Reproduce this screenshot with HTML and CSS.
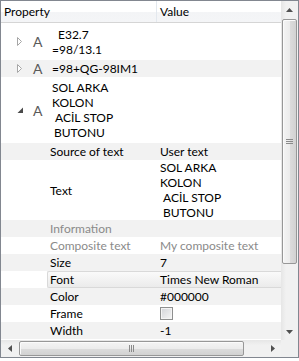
FILE: index.html
```html
<!DOCTYPE html>
<html lang="tr">
<head>
  <meta charset="UTF-8">
  <meta name="viewport" content="width=device-width, initial-scale=1.0">
  <title>Property Browser</title>
  <link rel="stylesheet" href="styles.css">
</head>
<body>

  <div class="tree">
    <div class="viewport">

      <div class="header">
        <div class="hcell">Property</div>
        <div class="hcell">Value</div>
      </div>

      <div class="row r1">
        <div class="name">
          <span class="branch"><svg width="6" height="9" viewBox="0 0 6 9"><path d="M0.5 0.5 L4.5 4.5 L0.5 8.5 Z" fill="#fff" stroke="#a6a6a6"/></svg></span>
          <span class="icon">A</span>
          <div class="lines">
            <div class="in6">E32.7</div>
            <div>=98/13.1</div>
          </div>
        </div>
        <div class="value"></div>
      </div>

      <div class="row alt">
        <div class="name">
          <span class="branch"><svg width="6" height="9" viewBox="0 0 6 9"><path d="M0.5 0.5 L4.5 4.5 L0.5 8.5 Z" fill="#fff" stroke="#a6a6a6"/></svg></span>
          <span class="icon">A</span>
          <div>=98+QG-98IM1</div>
        </div>
        <div class="value"></div>
      </div>

      <div class="row r3">
        <div class="name">
          <span class="branch"><svg width="7" height="7" viewBox="0 0 7 7"><path d="M6 0.5 L6 6 L0.5 6 Z" fill="#4a4a4a"/></svg></span>
          <span class="icon">A</span>
          <div class="lines">
            <div>SOL ARKA</div>
            <div>KOLON</div>
            <div class="in3">ACİL STOP</div>
            <div class="in2">BUTONU</div>
          </div>
        </div>
        <div class="value"></div>
      </div>

      <div class="row alt">
        <div class="name child"><div class="label">Source of text</div></div>
        <div class="value">User text</div>
      </div>

      <div class="row">
        <div class="name child"><div class="label">Text</div></div>
        <div class="value">
          <div class="lines">
            <div>SOL ARKA</div>
            <div>KOLON</div>
            <div class="in3">ACİL STOP</div>
            <div class="in3">BUTONU</div>
          </div>
        </div>
      </div>

      <div class="row alt dim">
        <div class="name child"><div class="label">Information</div></div>
        <div class="value"></div>
      </div>

      <div class="row dim">
        <div class="name child"><div class="label">Composite text</div></div>
        <div class="value">My composite text</div>
      </div>

      <div class="row alt">
        <div class="name child"><div class="label">Size</div></div>
        <div class="value">7</div>
      </div>

      <div class="row sel">
        <div class="name child"><div class="label">Font</div></div>
        <div class="value">Times New Roman</div>
      </div>

      <div class="row alt">
        <div class="name child"><div class="label">Color</div></div>
        <div class="value">#000000</div>
      </div>

      <div class="row">
        <div class="name child"><div class="label">Frame</div></div>
        <div class="value"><span class="check"></span></div>
      </div>

      <div class="row alt">
        <div class="name child"><div class="label">Width</div></div>
        <div class="value">-1</div>
      </div>

    </div>

    <!-- vertical scrollbar -->
    <div class="vscroll">
      <div class="sbtn"><svg width="7" height="4" viewBox="0 0 7 4"><path d="M3.5 0 L7 4 L0 4 Z" fill="#505050"/></svg></div>
      <div class="vthumb">
        <svg width="7" height="5" viewBox="0 0 7 5"><path d="M0 0.5 H7 M0 2.5 H7 M0 4.5 H7" stroke="#8a8a8a"/></svg>
      </div>
      <div class="track"></div>
      <div class="sbtn"><svg width="7" height="4" viewBox="0 0 7 4"><path d="M0 0 L7 0 L3.5 4 Z" fill="#505050"/></svg></div>
    </div>

    <!-- horizontal scrollbar -->
    <div class="hscroll">
      <div class="sbtn"><svg width="4" height="7" viewBox="0 0 4 7"><path d="M0 3.5 L4 0 L4 7 Z" fill="#505050"/></svg></div>
      <div class="hthumb">
        <svg width="5" height="7" viewBox="0 0 5 7"><path d="M0.5 0 V7 M2.5 0 V7 M4.5 0 V7" stroke="#8a8a8a"/></svg>
      </div>
      <div class="track"></div>
      <div class="sbtn"><svg width="4" height="7" viewBox="0 0 4 7"><path d="M0 0 L4 3.5 L0 7 Z" fill="#505050"/></svg></div>
    </div>

    <div class="corner"></div>
  </div>

</body>
</html>
```

FILE: styles.css
```css
* {
  box-sizing: border-box;
}

body {
  margin: 0;
  background: #fff;
  font-family: Lato, "Liberation Sans", sans-serif;
  font-size: 12px;
  color: #000;
}

/* widget frame */
.tree {
  width: 299px;
  height: 358px;
  border: 1px solid #828790;
  display: grid;
  grid-template-columns: 280px 17px;
  grid-template-rows: 339px 17px;
}

.viewport {
  overflow: hidden;
  background: #fff;
}

/* header */
.header {
  display: grid;
  grid-template-columns: 156px 1fr;
  height: 22px;
  border-bottom: 1px solid #d5d5d5;
  background: linear-gradient(#ffffff, #ffffff 50%, #f3f4f6 51%, #f4f5f7);
}

.hcell {
  line-height: 21px;
  padding-left: 3px;
}

.hcell:first-child {
  border-right: 1px solid #e3e8ee;
}

/* rows */
.row {
  display: grid;
  grid-template-columns: 156px 1fr;
  height: 17px;
  line-height: 17px;
}

.alt {
  background: #f2f2f2;
}

.dim {
  color: #8a8a8a;
}

.row.r1 {
  height: 37px;
}

.row.r3 {
  height: 66px;
}

.row:has(.value .lines) {
  height: 60px;
}

.lines {
  line-height: 15px;
}

.in2 { padding-left: 2px; }
.in3 { padding-left: 3px; }
.in6 { padding-left: 6px; }

.name {
  display: flex;
  align-items: center;
  white-space: nowrap;
  overflow: hidden;
}

.branch {
  width: 30px;
  padding-left: 16px;
  display: flex;
  align-items: center;
}

.icon {
  width: 21px;
  padding-left: 2px;
  font-size: 14px;
  color: #5a5a5a;
}

.name.child {
  padding-left: 46px;
  align-items: stretch;
}

.label {
  flex: 1;
  display: flex;
  align-items: center;
  padding-left: 2px;
  border: 1px solid transparent;
  border-right: none;
}

.value {
  display: flex;
  align-items: center;
  padding-left: 3px;
  white-space: nowrap;
  overflow: hidden;
}

/* current item */
.sel .label {
  border-color: #d9d9d9;
  border-radius: 2px 0 0 2px;
  background: linear-gradient(#fafafa, #ebebeb);
}

.sel .value {
  border-top: 1px solid #d9d9d9;
  border-bottom: 1px solid #d9d9d9;
  background: linear-gradient(#fafafa, #ebebeb);
}

.check {
  width: 13px;
  height: 13px;
  border: 1px solid #8e8f8f;
  background: linear-gradient(135deg, #d2d4d8, #f6f6f6);
  box-shadow: inset 0 0 0 1px #f4f4f4;
}

/* scrollbars */
.vscroll {
  display: flex;
  flex-direction: column;
  background: linear-gradient(to right, #e6e6e6, #f1f1f1 30%, #f1f1f1);
}

.hscroll {
  display: flex;
  background: linear-gradient(#e6e6e6, #f1f1f1 30%, #f1f1f1);
}

.sbtn {
  width: 17px;
  height: 17px;
  display: flex;
  align-items: center;
  justify-content: center;
}

.track {
  flex: 1;
}

.vthumb {
  height: 245px;
  margin: 1px 1px 0;
  border: 1px solid #979797;
  border-radius: 2px;
  background: linear-gradient(to right, #f4f4f4, #ececec 50%, #dcdcdc 51%, #d2d2d2);
  box-shadow: inset 1px 1px 0 #fbfbfb;
  display: flex;
  align-items: center;
  justify-content: center;
}

.hthumb {
  width: 225px;
  margin: 1px 0 1px 1px;
  border: 1px solid #979797;
  border-radius: 2px;
  background: linear-gradient(#f4f4f4, #ececec 50%, #dcdcdc 51%, #d2d2d2);
  box-shadow: inset 1px 1px 0 #fbfbfb;
  display: flex;
  align-items: center;
  justify-content: center;
}

.corner {
  background: #f0f0f0;
}
```
